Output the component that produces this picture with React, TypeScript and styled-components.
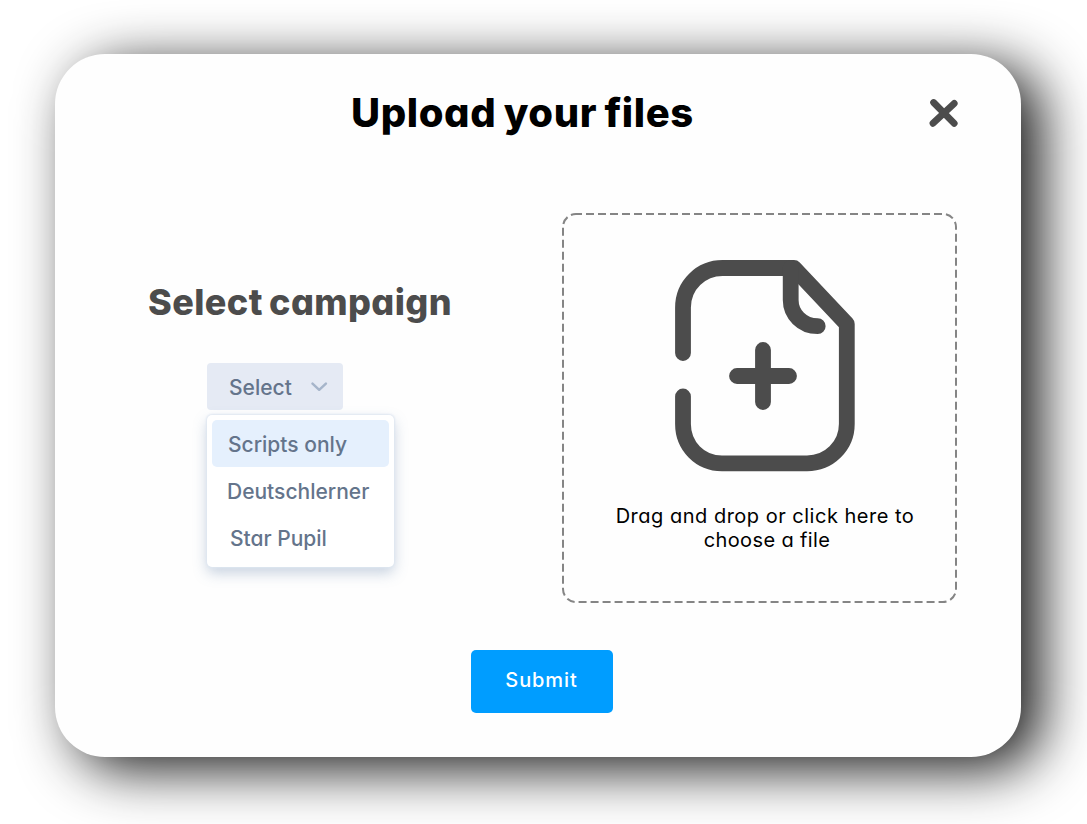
import React, { useState } from "react";
import styled, { createGlobalStyle } from "styled-components";

const GlobalStyle = createGlobalStyle`
  * { box-sizing: border-box; }
  html, body { margin: 0; background: #fff; }
  body { overflow: hidden; }
  button { font: inherit; border: 0; padding: 0; cursor: pointer; }
`;

const Page = styled.main`
  width: 1087px;
  height: 824px;
  padding: 54px 0 0 55px;
  overflow: hidden;
  font-family: Inter, "Open Sans", sans-serif;
  font-feature-settings: "cv11";
`;

const Modal = styled.section`
  display: flex;
  flex-direction: column;
  width: 966px;
  height: 703px;
  border-radius: 50px;
  background: #fefefe;
  box-shadow: 20px 12px 56px rgba(0, 0, 0, 0.9);
`;

const Header = styled.header`
  display: flex;
  align-items: center;
  justify-content: space-between;
  height: 118px;
  padding: 0 61px 0 296px;
`;

const Title = styled.h1`
  margin: 0;
  font-size: 40px;
  font-weight: 800;
  line-height: 60px;
  letter-spacing: 0.6px;
  word-spacing: -2px;
  color: #000;
  white-space: nowrap;
`;

const CloseButton = styled.button`
  display: flex;
  width: 32px;
  height: 32px;
  background: none;
`;

const Body = styled.div`
  display: flex;
  justify-content: space-between;
  height: 390px;
  margin-top: 41px;
  padding: 0 64px 0 93px;
`;

const Campaign = styled.div`
  display: flex;
  flex-direction: column;
  align-items: flex-start;
  padding-top: 64px;
`;

const CampaignTitle = styled.h2`
  margin: 0;
  font-size: 36px;
  font-weight: 800;
  line-height: 50px;
  letter-spacing: 0.4px;
  word-spacing: -2px;
  color: #4c4c4c;
  white-space: nowrap;
`;

const SelectButton = styled.button`
  display: flex;
  align-items: center;
  justify-content: space-between;
  width: 136px;
  height: 47px;
  margin: 36px 0 0 59px;
  padding: 0 15px 0 22px;
  border-radius: 4px;
  background: #e5eaf4;
`;

const Label = styled.span`
  padding-top: 2px;
  font-size: 21px;
  font-weight: 500;
  line-height: 30px;
  color: #64748b;
  white-space: nowrap;
`;

const Menu = styled.ul`
  width: 187px;
  height: 152px;
  margin: 5px 0 0 59px;
  padding: 5px;
  list-style: none;
  border-radius: 5px;
  background: #fff;
  box-shadow: 0 0 2px 1px #dfe7f1, 0 6px 14px rgba(100, 130, 170, 0.36);
`;

const Option = styled.li<{ $active?: boolean; $indent: number }>`
  display: flex;
  align-items: center;
  height: 47px;
  padding-top: 1px;
  padding-left: ${(p) => p.$indent}px;
  border-radius: 5px;
  background: ${(p) => (p.$active ? "#e5f0fd" : "transparent")};
  cursor: pointer;
`;

const DropZone = styled.div`
  position: relative;
  display: flex;
  flex-direction: column;
  align-items: center;
  width: 395px;
  height: 390px;
  padding: 47px 0 0 11px;
  cursor: pointer;
`;

const DashedOutline = styled.svg`
  position: absolute;
  inset: 0;
`;

const DropText = styled.p`
  margin: 32px 0 0;
  font-size: 20px;
  line-height: 24px;
  text-align: center;
  color: #000;
`;

const DropLine = styled.span<{ $spacing: number; $indent?: number }>`
  display: block;
  padding-left: ${(p) => p.$indent ?? 0}px;
  letter-spacing: ${(p) => p.$spacing}px;
  white-space: nowrap;
`;

const SubmitButton = styled.button`
  width: 142px;
  height: 63px;
  margin: 47px 0 0 416px;
  padding: 0 1px 3px 0;
  border-radius: 5px;
  background: #009dff;
  color: #fff;
  font-size: 20px;
  font-weight: 500;
  letter-spacing: 0.9px;
`;

const options = [
  { name: "Scripts only", indent: 16 },
  { name: "Deutschlerner", indent: 15 },
  { name: "Star Pupil", indent: 18 },
];

const CloseIcon = () => (
  <svg width="32" height="32" viewBox="0 0 32 32" fill="none" stroke="#4c4c4c" strokeWidth="6.8" strokeLinecap="round">
    <path d="M5.600 5.500 26.200 26.300M26.200 6.400 5 26.300" />
  </svg>
);

const Chevron = () => (
  <svg width="18" height="12" viewBox="0 0 18 12" fill="none" stroke="#a6b5ca" strokeWidth="2.5" strokeLinecap="round" strokeLinejoin="round">
    <path d="M2.500 2.700 9.200 8.800 15.900 2.700" />
  </svg>
);

const FileIcon = () => (
  <svg width="180" height="212" viewBox="675 260 180 212" fill="none" stroke="#4c4c4c" strokeWidth="15.8" strokeLinecap="round" strokeLinejoin="round">
    <path d="M683 353V307.500C683 285 701 268 722.500 268H794L846.800 324V424C846.800 446 829 463.400 807 463.400H722C700 463.400 683 446 683 424V396.500" />
    <path d="M790.700 268V300C790.700 314 802 326.200 817.700 326.200" />
    <path d="M737 376H789M763 350V402" />
  </svg>
);

export default function App() {
  const [selected, setSelected] = useState("Scripts only");
  return (
    <>
      <GlobalStyle />
      <Page>
        <Modal>
          <Header>
            <Title>Upload your files</Title>
            <CloseButton aria-label="Close"><CloseIcon /></CloseButton>
          </Header>
          <Body>
            <Campaign>
              <CampaignTitle>Select campaign</CampaignTitle>
              <SelectButton>
                <Label>Select</Label>
                <Chevron />
              </SelectButton>
              <Menu>
                {options.map((o) => (
                  <Option key={o.name} $active={o.name === selected} $indent={o.indent} onClick={() => setSelected(o.name)}>
                    <Label>{o.name}</Label>
                  </Option>
                ))}
              </Menu>
            </Campaign>
            <DropZone>
              <DashedOutline width="395" height="390" fill="none" aria-hidden="true">
                <rect x="1" y="1" width="393" height="388" rx="13" stroke="#858585" strokeWidth="2" strokeDasharray="8 4" strokeDashoffset="2" />
              </DashedOutline>
              <FileIcon />
              <DropText>
                <DropLine $spacing={0.5}>Drag and drop or click here to</DropLine>
                <DropLine $spacing={0.36} $indent={4}>choose a file</DropLine>
              </DropText>
            </DropZone>
          </Body>
          <SubmitButton>Submit</SubmitButton>
        </Modal>
      </Page>
    </>
  );
}
